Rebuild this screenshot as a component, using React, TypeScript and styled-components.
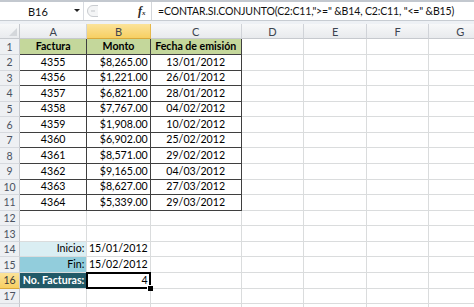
import React from "react";
import styled, { createGlobalStyle, css } from "styled-components";

const GlobalStyle = createGlobalStyle`
  html, body { margin: 0; padding: 0; background: #ffffff; overflow: hidden; }
  body { font-family: Lato, "Open Sans", sans-serif; }
`;

const Window = styled.div`
  width: 474px;
  height: 307px;
  display: flex;
  flex-direction: column;
  overflow: hidden;
  background: #ffffff;
`;

const FormulaBar = styled.div`
  flex: none;
  height: 21px;
  box-sizing: border-box;
  border-top: 2px solid #c3c8cf;
  border-bottom: 1px solid #c7ccd2;
  display: flex;
  align-items: center;
  overflow: hidden;
  background: #ffffff;
  font-family: Lato, "Open Sans", sans-serif;
  font-size: 11px;
  color: #111;
  & > * { flex: none; }
`;

const NameBox = styled.div`
  width: 84px;
  height: 100%;
  box-sizing: border-box;
  border-right: 1px solid #d8dbe0;
  display: flex;
  align-items: center;
  padding-left: 28px;
  position: relative;
`;

const DropArrow = styled.span`
  position: absolute;
  right: 3px;
  top: 7px;
  width: 0;
  height: 0;
  border-left: 3px solid transparent;
  border-right: 3px solid transparent;
  border-top: 3px solid #222;
`;

const Handle = styled.svg`
  margin-left: 2px;
`;

const FxButton = styled.div`
  margin-left: 40px;
  width: 11px;
  font-family: "Liberation Serif", serif;
  font-style: italic;
  font-weight: bold;
  font-size: 12px;
  color: #2a2a2a;
  display: flex;
  align-items: baseline;
  & sub { font-size: 7px; font-style: italic; vertical-align: baseline; }
`;

const FxDivider = styled.div`
  width: 1px;
  height: 18px;
  background: #d3d6da;
  margin-left: 2px;
`;

const FormulaText = styled.div`
  margin-left: 6px;
  white-space: nowrap;
  font-size: 10.5px;
  letter-spacing: -0.15px;
`;

const Band = styled.div`
  flex: none;
  height: 3px;
  background: #eef1f5;
`;

const Sheet = styled.div`
  display: grid;
  grid-template-columns: 20px 67.3px 63.4px 91px 62.6px 62.6px 62.6px 62.6px;
  grid-template-rows: 15.4px repeat(18, 15.58px);
`;

const Corner = styled.div`
  box-sizing: border-box;
  background: linear-gradient(#f7f8f9, #e9ebee);
  border-right: 1px solid #c6c9ce;
  border-bottom: 1px solid #c6c9ce;
  position: relative;
  &::after {
    content: "";
    position: absolute;
    right: 2px;
    bottom: 2px;
    width: 0;
    height: 0;
    border-left: 8px solid transparent;
    border-bottom: 8px solid #d4d7db;
  }
`;

const ColHeader = styled.div<{ $selected?: boolean }>`
  box-sizing: border-box;
  display: flex;
  align-items: center;
  justify-content: center;
  font-size: 11px;
  color: #3c4450;
  background: linear-gradient(#f7f8f9, #e8eaed);
  border-right: 1px solid #d0d3d8;
  border-bottom: 1px solid #c6c9ce;
  ${(p) =>
    p.$selected &&
    css`
      background: linear-gradient(#fbe39a, #f7cf62);
      border-right-color: #e6b84a;
      border-bottom-color: #d9a83a;
    `}
`;

const RowHeader = styled.div<{ $selected?: boolean }>`
  box-sizing: border-box;
  display: flex;
  align-items: center;
  justify-content: center;
  font-size: 10.5px;
  color: #4a5260;
  background: #eef0f3;
  border-right: 1px solid #c6c9ce;
  border-bottom: 1px solid #d6d9de;
  ${(p) =>
    p.$selected &&
    css`
      background: linear-gradient(#fbe39a, #f7cf62);
      border-bottom-color: #d9a83a;
      color: #3a3a3a;
    `}
`;

type Align = "left" | "center" | "right";

const Cell = styled.div<{
  $align?: Align;
  $bg?: string;
  $bold?: boolean;
  $color?: string;
  $table?: boolean;
  $active?: boolean;
}>`
  box-sizing: border-box;
  position: relative;
  display: flex;
  align-items: flex-end;
  padding: 0 2px 1px 2px;
  justify-content: ${(p) =>
    p.$align === "right" ? "flex-end" : p.$align === "center" ? "center" : "flex-start"};
  background: ${(p) => p.$bg || "#ffffff"};
  font-size: 10.6px;
  line-height: 13px;
  font-weight: ${(p) => (p.$bold ? 700 : 400)};
  color: ${(p) => p.$color || "#000"};
  border-right: 1px solid ${(p) => (p.$table ? "#3f3f3f" : "#dadcdd")};
  border-bottom: 1px solid ${(p) => (p.$table ? "#3f3f3f" : "#dadcdd")};
  white-space: nowrap;
  ${(p) =>
    p.$active &&
    css`
      z-index: 2;
      &::before {
        content: "";
        position: absolute;
        left: -1px;
        top: -1px;
        right: -1px;
        bottom: -1px;
        border: 2px solid #000;
        pointer-events: none;
      }
      &::after {
        content: "";
        position: absolute;
        right: -3px;
        bottom: -3px;
        width: 5px;
        height: 5px;
        background: #000;
        border-left: 1px solid #fff;
        border-top: 1px solid #fff;
      }
    `}
`;

const rows: [string, string, string][] = [
  ["4355", "$8,265.00", "13/01/2012"],
  ["4356", "$1,221.00", "26/01/2012"],
  ["4357", "$6,821.00", "28/01/2012"],
  ["4358", "$7,767.00", "04/02/2012"],
  ["4359", "$1,908.00", "10/02/2012"],
  ["4360", "$6,902.00", "25/02/2012"],
  ["4361", "$8,571.00", "29/02/2012"],
  ["4362", "$9,165.00", "04/03/2012"],
  ["4363", "$8,627.00", "27/03/2012"],
  ["4364", "$5,339.00", "29/03/2012"],
];

const columns = ["A", "B", "C", "D", "E", "F", "G"];

const Blank = ({ n }: { n: number }) => (
  <>
    {Array.from({ length: n }).map((_, i) => (
      <Cell key={i} />
    ))}
  </>
);

export default function App() {
  const green = "#c4d79b";
  return (
    <Window>
      <GlobalStyle />
      <FormulaBar>
        <NameBox>
          B16
          <DropArrow />
        </NameBox>
        <Handle width="12" height="14" viewBox="0 0 12 14">
          <path d="M12 1.5 H7 A5.5 5.5 0 0 0 7 12.5 H12" fill="#f4f5f6" stroke="#c9ccd0" strokeWidth="1" />
          <path d="M5 7 H9" stroke="#c2c5c9" strokeWidth="1" />
        </Handle>
        <FxButton>
          f<sub>x</sub>
        </FxButton>
        <FxDivider />
        <FormulaText>=CONTAR.SI.CONJUNTO(C2:C11,"&gt;=" &amp;B14, C2:C11, "&lt;=" &amp;B15)</FormulaText>
      </FormulaBar>
      <Band />
      <Sheet>
        <Corner />
        {columns.map((c) => (
          <ColHeader key={c} $selected={c === "B"}>
            {c}
          </ColHeader>
        ))}

        <RowHeader>1</RowHeader>
        <Cell $table $bold $bg={green} $align="center">Factura</Cell>
        <Cell $table $bold $bg={green} $align="center">Monto</Cell>
        <Cell $table $bold $bg={green} $align="center">Fecha de emisión</Cell>
        <Blank n={4} />

        {rows.map((r, i) => (
          <React.Fragment key={r[0]}>
            <RowHeader>{i + 2}</RowHeader>
            <Cell $table $align="center">{r[0]}</Cell>
            <Cell $table $align="right">{r[1]}</Cell>
            <Cell $table $align="center">{r[2]}</Cell>
            <Blank n={4} />
          </React.Fragment>
        ))}

        <RowHeader>12</RowHeader>
        <Blank n={7} />
        <RowHeader>13</RowHeader>
        <Blank n={7} />

        <RowHeader>14</RowHeader>
        <Cell $align="right" $bg="#daeef3">Inicio:</Cell>
        <Cell $align="right">15/01/2012</Cell>
        <Blank n={5} />

        <RowHeader>15</RowHeader>
        <Cell $align="right" $bg="#92cddc">Fin:</Cell>
        <Cell $align="right">15/02/2012</Cell>
        <Blank n={5} />

        <RowHeader $selected>16</RowHeader>
        <Cell $align="right" $bg="#215967" $bold $color="#ffffff">No. Facturas:</Cell>
        <Cell $align="right" $active>4</Cell>
        <Blank n={5} />

        <RowHeader>17</RowHeader>
        <Blank n={7} />

        <RowHeader />
        <Blank n={7} />
      </Sheet>
    </Window>
  );
}
